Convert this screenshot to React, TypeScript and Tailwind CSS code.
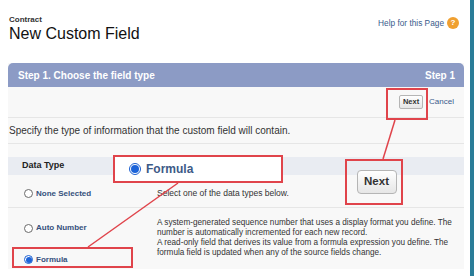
import type { ReactNode } from "react";

const font = { fontFamily: '"Liberation Sans", Arial, sans-serif' };

function Radio({ checked, big }: { checked?: boolean; big?: boolean }) {
  const size = big ? "w-[12px] h-[12px]" : "w-[9px] h-[9px]";
  return (
    <span
      className={`${size} inline-flex shrink-0 items-center justify-center rounded-full border ${
        checked ? "border-[#1b5fd1] bg-white" : "border-[#6b6b6b] bg-white"
      }`}
    >
      {checked && <span className={`${big ? "w-[8px] h-[8px]" : "w-[6px] h-[6px]"} rounded-full bg-[#1c63d8]`} />}
    </span>
  );
}

function NextButton({ big }: { big?: boolean }) {
  return (
    <span
      className={`inline-flex items-center justify-center border border-[#b5b5b5] bg-gradient-to-b from-white to-[#e6e6e6] font-bold text-[#333] ${
        big ? "h-[24px] w-[40px] rounded-[4px] text-[11.5px]" : "h-[14px] w-[24px] rounded-[2px] text-[7.5px]"
      }`}
    >
      Next
    </span>
  );
}

function Row({ label, children, className = "" }: { label: ReactNode; children: ReactNode; className?: string }) {
  return (
    <div className={`grid grid-cols-[149px_1fr] ${className}`}>
      <div className="flex items-center gap-[3px] self-stretch pl-[16px]">{label}</div>
      <div className="pr-[4px] text-[8.2px] leading-[10px] text-[#333]">{children}</div>
    </div>
  );
}

export default function App() {
  return (
    <div className="relative flex h-[276px] w-[474px] overflow-hidden bg-white" style={font}>
      <div className="w-[470px]">
        <div className="flex h-[63px] justify-between px-[9px] pt-[15px]">
          <div>
            <div className="text-[8px] font-bold leading-[9px] text-[#333]">Contract</div>
            <div className="text-[16px] leading-[20px] text-[#111]">New Custom Field</div>
          </div>
          <div className="flex h-[14px] items-center gap-[3px] pr-[2px] pt-[2px]">
            <span className="text-[8.3px] text-[#3a5c8c]">Help for this Page</span>
            <span className="flex h-[12px] w-[12px] items-center justify-center rounded-full bg-[#f0a030] text-[8px] font-bold leading-none text-white">
              ?
            </span>
          </div>
        </div>

        <div className="mx-[8px] w-[456px] bg-[#f8f8f8]">
          <div className="flex h-[24px] items-center justify-between rounded-t-[5px] bg-[#8c9bc5] pl-[10px] pr-[9px] text-[10px] font-bold text-white">
            <span>Step 1. Choose the field type</span>
            <span>Step 1</span>
          </div>
          <div className="flex h-[31px] items-center justify-end gap-[6px] border-b border-[#e6e6e6] pr-[10px]">
            <NextButton />
            <span className="text-[8px] text-[#3a5c8c]">Cancel</span>
          </div>
          <div className="flex h-[26px] items-center border-b border-[#e6e6e6] pl-[1px] text-[10px] text-[#333]">
            Specify the type of information that the custom field will contain.
          </div>
          <div className="h-[13px]" />
          <div className="flex h-[18px] items-center bg-[#e9ecf2] pl-[14px] text-[9px] font-bold text-[#222]">Data Type</div>
          <Row
            className="h-[33px] items-center border-b border-[#e6e6e6] pt-[5px]"
            label={
              <>
                <Radio />
                <span className="text-[8px] font-bold text-[#35507c]">None Selected</span>
              </>
            }
          >
            <span className="text-[8.5px]">Select one of the data types below.</span>
          </Row>
          <Row
            className="items-center pt-[10px]"
            label={
              <>
                <Radio />
                <span className="text-[8px] font-bold text-[#35507c]">Auto Number</span>
              </>
            }
          >
            A system-generated sequence number that uses a display format you define. The number is automatically
            incremented for each new record.
          </Row>
          <Row
            className="h-[31px] items-start"
            label={
              <div className="flex items-center gap-[3px] pt-[12px]">
                <Radio checked />
                <span className="text-[8px] font-bold text-[#35507c]">Formula</span>
              </div>
            }
          >
            A read-only field that derives its value from a formula expression you define. The formula field is updated
            when any of the source fields change.
          </Row>
        </div>
      </div>
      <div className="w-[4px] bg-[#2a7d98]" />

      {/* callouts */}
      <div className="absolute left-[386px] top-[88px] h-[32px] w-[42px] border-2 border-[#e0444b]" />
      <div className="absolute left-[12px] top-[247px] h-[21px] w-[121px] border-2 border-[#e0444b]" />
      <div className="absolute left-[113px] top-[155px] flex h-[28px] w-[170px] items-center gap-[5px] border-2 border-[#e0444b] bg-white pl-[14px]">
        <Radio checked big />
        <span className="text-[12px] font-bold text-[#3d5a86]">Formula</span>
      </div>
      <div className="absolute left-[345px] top-[159px] flex h-[46px] w-[58px] items-center justify-center border-2 border-[#e0444b] pl-[5px]">
        <NextButton big />
      </div>
      <svg className="pointer-events-none absolute left-0 top-0" width="474" height="276">
        <line x1="395" y1="120" x2="383" y2="159" stroke="#e0444b" strokeWidth="1.5" />
        <line x1="178" y1="183" x2="88" y2="247" stroke="#e0444b" strokeWidth="1.5" />
      </svg>
    </div>
  );
}
